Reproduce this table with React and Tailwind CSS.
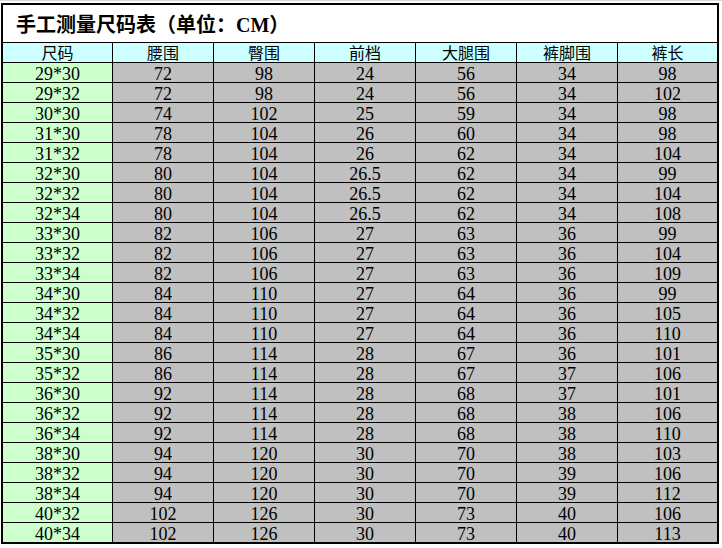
import React from 'react';

const headers = ['尺码', '腰围', '臀围', '前档', '大腿围', '裤脚围', '裤长'];

const rows = [
  ['29*30', 72, 98, 24, 56, 34, 98],
  ['29*32', 72, 98, 24, 56, 34, 102],
  ['30*30', 74, 102, 25, 59, 34, 98],
  ['31*30', 78, 104, 26, 60, 34, 98],
  ['31*32', 78, 104, 26, 62, 34, 104],
  ['32*30', 80, 104, '26.5', 62, 34, 99],
  ['32*32', 80, 104, '26.5', 62, 34, 104],
  ['32*34', 80, 104, '26.5', 62, 34, 108],
  ['33*30', 82, 106, 27, 63, 36, 99],
  ['33*32', 82, 106, 27, 63, 36, 104],
  ['33*34', 82, 106, 27, 63, 36, 109],
  ['34*30', 84, 110, 27, 64, 36, 99],
  ['34*32', 84, 110, 27, 64, 36, 105],
  ['34*34', 84, 110, 27, 64, 36, 110],
  ['35*30', 86, 114, 28, 67, 36, 101],
  ['35*32', 86, 114, 28, 67, 37, 106],
  ['36*30', 92, 114, 28, 68, 37, 101],
  ['36*32', 92, 114, 28, 68, 38, 106],
  ['36*34', 92, 114, 28, 68, 38, 110],
  ['38*30', 94, 120, 30, 70, 38, 103],
  ['38*32', 94, 120, 30, 70, 39, 106],
  ['38*34', 94, 120, 30, 70, 39, 112],
  ['40*32', 102, 126, 30, 73, 40, 106],
  ['40*34', 102, 126, 30, 73, 40, 113],
];

const cols = 'grid grid-cols-[110px_101px_101px_101px_101px_101px_99px]';

export default function App() {
  return (
    <div
      className="h-[548px] w-[722px] overflow-hidden border-t border-[#d8d8d8] bg-white pl-[1px] pt-[2px] text-black"
      style={{ fontFamily: "'Liberation Serif', 'Noto Sans CJK SC', serif" }}
    >
      <div className="w-[718px] border-2 border-black">
        {/* Title */}
        <div className="flex h-[38px] items-center border-b border-black pl-[13px] pt-[3px]">
          <span className="text-[20px] font-bold leading-none">手工测量尺码表（单位：CM）</span>
        </div>

        {/* Header */}
        <div className={`${cols} h-[20px] border-b border-black bg-[#ccffff]`}>
          {headers.map((h, i) => (
            <div
              key={h}
              className={`h-[19px] text-center text-[16px] leading-[19px] ${i < 6 ? 'border-r border-black' : ''}`}
              style={{ fontFamily: "'Noto Sans CJK SC', sans-serif" }}
            >
              {h}
            </div>
          ))}
        </div>

        {/* Rows */}
        {rows.map((r, ri) => (
          <div
            key={r[0]}
            className={`${cols} ${ri < rows.length - 1 ? 'h-[20px] border-b border-black' : 'h-[19px]'}`}
          >
            {r.map((v, i) => (
              <div
                key={i}
                className={`h-[19px] pt-[3px] text-center text-[18px] leading-[16px] ${
                  i === 0 ? 'bg-[#ccffcc]' : 'bg-[#c0c0c0]'
                } ${i < 6 ? 'border-r border-black' : ''}`}
              >
                {v}
              </div>
            ))}
          </div>
        ))}
      </div>
    </div>
  );
}
